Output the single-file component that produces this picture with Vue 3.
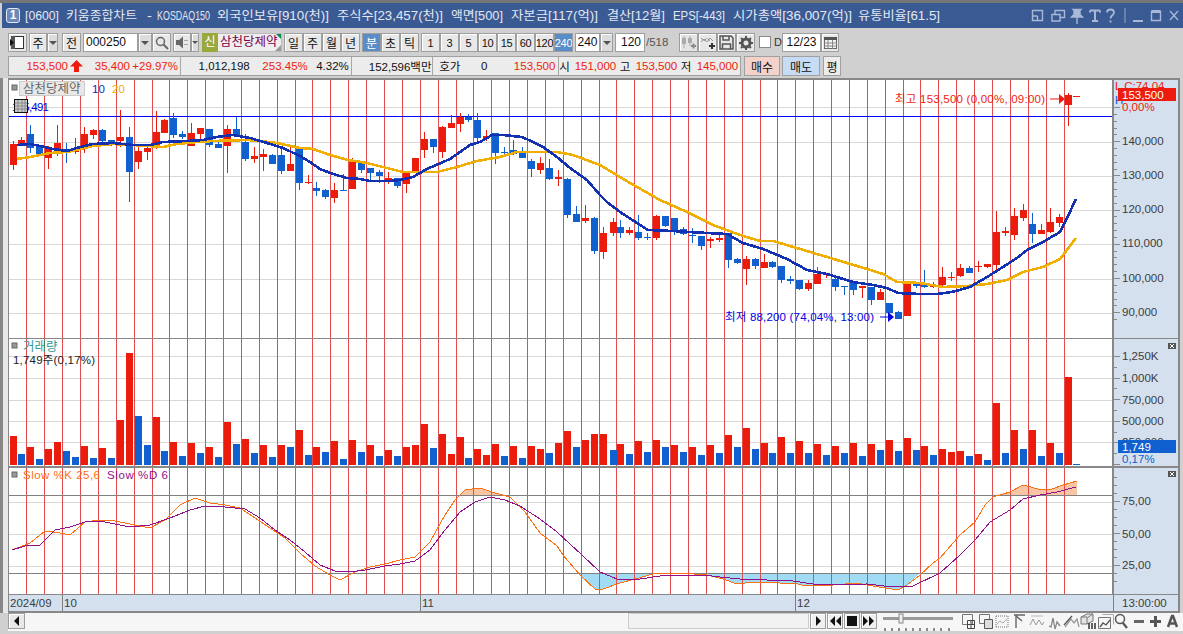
<script setup>
import { computed } from "vue";

// title segments: start x (from the text origin) and drawn width
const titleParts = [
  { t: '[0600]', x: 0, w: 34 },
  { t: '키움종합차트', x: 41, w: 71 },
  { t: '-', x: 122, w: 5 },
  { t: 'KOSDAQ150', x: 132, w: 53 },
  { t: '외국인보유[910(천)]', x: 192, w: 112 },
  { t: '주식수[23,457(천)]', x: 312, w: 106 },
  { t: '액면[500]', x: 426, w: 52 },
  { t: '자본금[117(억)]', x: 486, w: 87 },
  { t: '결산[12월]', x: 582, w: 58 },
  { t: 'EPS[-443]', x: 648, w: 52 },
  { t: '시가총액[36,007(억)]', x: 708, w: 119 },
  { t: '유통비율[61.5]', x: 833, w: 82 },
];

// day separators (the red lines)
const dayLines = [26,44,62,80,98,116,134,152,169,187,205,223,241,259,277,295,312,330,348,366,384,402,420,438,456,473,491,509,527,545,563,581,599,616,634,652,670,688,706,724,742,760,777,795,813,831,849,867,885,903,920,938,956,974,992,1010,1028,1046,1064];

// x, colour, body top, body bottom, wick top, wick bottom (page pixels)
const candles = [
  [13,'R',144,165,141,170],[21,'R',140,145,137,145],[30,'B',134,148,125,153],[39,'B',147,154,146,154],
  [48,'R',147,158,146,169],[57,'R',143,149,125,156],[66,'B',150,153,143,163],[75,'R',148,152,138,154],
  [84,'R',134,149,127,153],[93,'R',130,135,129,139],[102,'B',130,141,129,146],[111,'B',140,144,140,146],
  [120,'R',137,141,110,147],[129,'B',137,172,127,202],[138,'R',151,162,147,169],[147,'R',148,152,146,160],
  [156,'R',132,146,111,149],[164,'R',120,133,119,133],[173,'B',118,135,113,138],[182,'B',134,137,131,139],
  [191,'R',133,146,123,146],[200,'R',128,134,128,140],[209,'B',129,145,129,147],[218,'B',144,148,140,148],
  [227,'R',129,146,125,173],[236,'B',129,136,117,137],[245,'B',142,159,134,161],[254,'R',156,159,147,163],
  [263,'R',154,157,149,171],[272,'B',155,164,154,164],[281,'B',155,171,147,174],[290,'R',164,171,146,171],
  [299,'B',148,183,148,190],[308,'R',182,183,175,184],[316,'B',188,191,182,196],[325,'B',190,197,189,199],
  [334,'R',190,198,183,203],[343,'B',190,191,174,191],[352,'R',162,189,158,189],[361,'B',162,170,161,173],
  [370,'B',168,173,168,180],[379,'B',172,176,170,183],[388,'R',178,180,172,184],[397,'B',178,186,178,188],
  [406,'R',172,184,171,193],[415,'R',158,173,158,173],[424,'R',139,150,132,158],[433,'B',139,147,139,153],
  [442,'R',127,152,126,158],[451,'R',123,128,115,128],[460,'R',117,124,113,132],[468,'B',117,120,114,122],
  [477,'B',120,138,113,143],[486,'R',136,138,130,141],[495,'B',133,153,133,164],[504,'B',152,153,147,156],
  [513,'B',150,154,140,155],[522,'B',152,158,147,158],[531,'B',161,169,159,177],[540,'R',163,170,157,174],
  [549,'B',168,179,159,180],[558,'R',177,179,170,186],[567,'B',179,215,178,218],[576,'B',214,222,206,222],
  [585,'R',218,221,205,223],[594,'B',218,251,217,254],[603,'R',233,252,227,259],[613,'R',222,233,218,236],
  [620,'B',227,233,220,238],[629,'R',230,233,227,235],[638,'B',232,238,215,240],[647,'B',237,238,233,240],
  [656,'R',216,238,215,240],[665,'B',216,226,216,227],[674,'B',218,231,218,235],[683,'B',229,234,227,235],
  [692,'B',235,236,228,243],[701,'B',236,246,236,250],[710,'R',239,241,237,248],[719,'R',238,240,234,242],
  [728,'B',233,260,233,268],[737,'B',259,263,258,264],[746,'R',259,269,256,285],[755,'B',259,266,258,269],
  [764,'R',262,268,254,268],[772,'B',262,267,261,268],[781,'B',266,280,266,283],[790,'B',279,281,276,284],
  [799,'B',280,289,280,290],[808,'R',283,289,280,291],[817,'R',274,284,267,284],[826,'R',273,274,273,278],
  [835,'B',279,287,275,291],[844,'B',286,287,286,295],[853,'B',283,290,282,295],[862,'R',286,288,286,298],
  [871,'B',287,300,287,305],[880,'R',292,300,289,300],[889,'B',303,313,303,313],[898,'B',312,319,311,319],
  [907,'R',284,316,282,316],[916,'B',284,286,282,288],[924,'B',283,287,270,288],[933,'R',285,287,282,288],
  [942,'R',277,285,267,287],[951,'R',277,278,272,281],[960,'R',268,276,264,277],[969,'B',268,273,266,273],
  [978,'R',266,267,261,272],[987,'R',264,267,264,268],[996,'R',232,265,211,270],[1005,'R',231,233,227,236],
  [1014,'R',216,235,208,240],[1023,'R',210,218,204,221],[1032,'B',224,234,213,243],[1041,'R',230,234,224,234],
  [1050,'R',222,232,208,233],[1059,'R',217,223,214,227],[1068,'R',95,105,93,126],[1076,'R',96,97,96,97],
];

const volumes = ('R436 B454 R447 B459 R449 R442 B451 B457 R446 B458 R448 B458 R420 R353 B416 B445 R417 B451 R442 B456 ' +
  'R443 B453 R447 B457 R422 B444 R439 B453 R445 B457 R445 B447 R430 B455 R447 B452 R441 B459 R440 B452 ' +
  'R445 B456 R450 B456 R447 R445 R424 B448 R434 R454 R437 B458 R449 R455 R444 B456 R446 B458 R446 R449 ' +
  'B453 R443 R431 B447 R440 R434 R434 B450 R444 B454 R441 B452 R440 B447 R445 B452 R447 B455 R445 B453 ' +
  'R435 B447 R428 B449 R443 B453 R437 B453 R441 B453 R444 B455 R446 B453 R443 B456 R444 B450 R440 B451 ' +
  'R438 B450 R446 B455 R449 R452 R451 B456 R454 B460 R403 B453 R430 B449 R430 B456 R443 B453 R377 B464').split(' ');

const volumeBars = computed(() => volumes.map((v, i) => ({
  x: candles[i][0] - 3,
  top: Number(v.slice(1)),
  color: v[0],
})));

const ma10 = '17,145 30,144 40,146 53,149 67,151 80,147 93,144 113,143 133,145 150,145 163,142 187,141 203,140 217,137 233,135 250,138 267,143 283,148 300,156 310,162 320,169 333,174 347,178 360,179 370,181 390,181 400,180 413,177 427,169 450,159 460,152 470,145 480,142 492,135 503,135 522,137 533,142 543,147 557,157 570,168 587,180 600,195 607,202 620,212 637,223 648,230 673,231 690,232 707,233 727,234 743,243 763,249 787,259 807,270 827,274 853,282 873,285 887,288 898,293 920,294 937,294 952,292 970,287 987,277 1003,267 1017,258 1027,250 1043,242 1060,232 1067,218 1076,199';
const ma20 = '17,159 30,157 40,155 50,153 67,152 80,149 93,146 113,144 133,145 163,147 177,144 197,142 213,141 247,140 260,141 277,143 300,148 313,149 330,155 348,160 367,163 383,167 403,172 437,172 457,167 477,161 500,157 517,152 557,152 573,155 600,165 630,183 660,200 687,212 713,225 740,235 760,241 773,241 800,249 827,257 867,269 883,274 897,282 920,283 943,287 967,286 987,284 1007,280 1023,272 1043,267 1060,259 1067,250 1076,238';

const slowK = '12,550 30,543 45,531 60,533 70,535 85,522 100,520 115,521 135,525 150,528 165,520 180,505 195,498 210,503 225,505 240,508 255,518 270,528 285,538 300,553 315,566 330,575 340,580 355,572 370,567 385,564 400,560 415,557 430,542 445,515 455,500 465,490 480,488 495,493 510,497 525,512 540,533 557,546 563,555 580,575 595,589 603,589 620,583 635,579 653,574 680,573 707,575 723,579 737,584 753,582 780,583 793,583 807,586 833,585 857,583 873,586 898,590 907,585 920,575 933,563 940,558 960,535 975,522 985,505 993,497 1010,492 1023,485 1042,490 1052,489 1063,485 1077,481';
const slowD = '12,550 25,546 40,545 55,530 70,527 85,522 100,521 115,524 130,527 150,525 170,518 190,510 205,506 225,507 245,509 260,518 275,530 290,540 305,552 320,565 335,571 350,572 365,570 385,566 400,564 415,561 430,550 445,530 460,512 475,502 490,497 505,500 520,506 540,519 557,532 582,555 600,572 617,579 640,579 660,576 680,575 703,575 720,577 740,579 793,581 813,584 833,585 867,584 893,587 913,586 940,573 960,555 975,540 990,522 1010,510 1023,499 1040,495 1057,492 1076,487';

const fillLow = '578,573 580,575 595,589 603,589 620,583 635,579 653,574 680,573 707,575 723,579 737,584 753,582 780,583 793,583 807,586 833,585 857,583 873,586 898,590 907,585 920,573';
const fillHighA = '459,495 465,490 480,488 495,493 505,495';
const fillHighB = '995,495 1010,492 1023,485 1042,490 1052,489 1063,485 1077,481 1077,495';

const gridMain = [107,142,176,210,244,279,313];
const gridVol = [356,378,400,421,442];
const gridStoch = [502,534,566];

const priceLabels = [[141,'140,000'],[175,'130,000'],[209,'120,000'],[243,'110,000'],[278,'100,000'],[312,'90,000']];
const volLabels = [[356,'1,250K'],[378,'1,000K'],[400,'750,000'],[421,'500,000'],[442,'250,000']];
const stochLabels = [[501,'75,00'],[534,'50,00'],[565,'25,00']];

// small ticks on the right axis
const ticks = computed(() => {
  const out = [];
  for (let i = 0; i < 32; i++) {
    const y = Math.round(107 + i * 6.84);
    out.push({ y, len: i % 5 === 0 ? 7 : 4 });
  }
  for (let i = 0; i < 11; i++) {
    const y = Math.round(356 + i * 10.8);
    out.push({ y, len: i % 2 === 0 ? 7 : 4 });
  }
  for (let i = 0; i < 14; i++) {
    const y = Math.round(477 + i * 8);
    if (y < 590) out.push({ y, len: (i - 3) % 4 === 0 ? 7 : 4 });
  }
  return out;
});

const periodA = ['일','주','월','년'];
const periodB = [
  { t: '분', on: true },
  { t: '초' },
  { t: '틱' },
];
const periodC = [
  { t: '1' },{ t: '3' },{ t: '5' },{ t: '10' },{ t: '15' },{ t: '60' },{ t: '120' },{ t: '240', on: true },
];

// quote strip, widths keep the numbers in their columns
const quoteCells = [
  [{ t:'153,500', w:59, c:'red' },{ arrow:true },{ t:'35,400', w:47, c:'red' },{ t:'+29.97%', w:48, c:'red' }],
  [{ t:'1,012,198', w:69 },{ t:'253.45%', w:58, c:'red' },{ t:'4.32%', w:41 }],
  [{ t:'152,596백만', w:80 }],
  [{ t:'호가', w:27 },{ t:'0', w:27 },{ t:'153,500', w:68, c:'red' }],
  [{ t:'시', w:10 },{ t:'151,000', w:47, c:'red' },{ t:'고', w:14 },{ t:'153,500', w:47, c:'red' },{ t:'저', w:14 },{ t:'145,000', w:47, c:'red' }],
];
</script>

<template>
  <div class="app">
    <div class="topline"></div>

    <!-- title bar -->
    <div class="titlebar">
      <span class="win-no">1</span>
      <svg class="title-text" width="920" height="25" viewBox="0 0 920 25">
        <text v-for="p in titleParts" :key="p.t" :x="p.x" y="17" :textLength="p.w" lengthAdjust="spacingAndGlyphs">{{ p.t }}</text>
      </svg>
      <div class="title-icons">
        <svg width="152" height="20" viewBox="0 0 152 20" fill="none" stroke="#a8b8d6" stroke-width="1.4">
          <path d="M1.5 4.5h10v10h-10zM1.5 10h5M6.5 10v4.5" />
          <path d="M21 8.5h8v6.500h-8zM24 8.500V4.500h9.500v7H29" />
          <path d="M42 3.500h8l-1 1v4l2.500 2.500h-11l2.500-2.500v-4zM46 11v7" fill="#a8b8d6" />
          <path d="M59 4.500h10M64 4.500v10M61 15h6M59 4.500v2M69 4.500v2" stroke-width="2" />
          <path d="M76 6.500c0-4 7-4 7 0 0 3-3.500 2.500-3.500 6M79.500 14.500v2" stroke-width="1.800" />
          <path d="M94 2v15" stroke="#7f92b8" />
          <path d="M102 15h10" stroke-width="2" />
          <path d="M120.500 5.500h9v9h-9z" />
          <path d="M120.500 5.500h9" stroke-width="3" />
          <path d="M139 5l8 9M147 5l-8 9" />
        </svg>
      </div>
    </div>

    <!-- toolbars -->
    <div class="toolbar">
      <div class="row row-one">
        <button class="btn w19">
          <svg width="15" height="13" viewBox="0 0 15 13"><rect x="1.500" y="0.500" width="12" height="12" fill="#fff" stroke="#333"/><rect x="1" y="0" width="4" height="13" fill="#555"/><path d="M0 3l4 3.500-4 3.500z" fill="#111"/></svg>
        </button>
        <button class="btn w18 ml2">주</button>
        <button class="btn drop w11"><i class="tri"></i></button>
        <button class="btn w19 ml4">전</button>
        <div class="field w55 ml2">000250</div>
        <button class="btn drop w14"><i class="tri"></i></button>
        <button class="btn w19">
          <svg width="14" height="14" viewBox="0 0 14 14" fill="none" stroke="#666"><circle cx="5.500" cy="5.500" r="4" stroke-width="1.500"/><path d="M8.500 8.500l4.500 4.500" stroke-width="2"/></svg>
        </button>
        <button class="btn w18 ml2">
          <svg width="14" height="13" viewBox="0 0 14 13"><path d="M1 4h3l4-3.500v12l-4-3.500h-3z" fill="#666"/><path d="M10 4v1M10 8v1M12 4v1M12 8v1" stroke="#666"/></svg>
        </button>
        <button class="btn drop w8"><i class="tri small"></i></button>
        <div class="new-tag ml3">신</div>
        <div class="stock-name">삼천당제약
          <i class="corner-top"></i><i class="corner-bot"></i>
        </div>
        <button v-for="p in periodA" :key="p" class="btn w19">{{ p }}</button>
        <button v-for="p in periodB" :key="p.t" class="btn w19" :class="{ on: p.on, ml2: p.t === '분' }">{{ p.t }}</button>
        <button v-for="p in periodC" :key="p.t" class="btn w19 num" :class="{ on: p.on, ml2: p.t === '1' }">{{ p.t }}</button>
        <div class="field w25 ml2 center">240</div>
        <button class="btn drop w13"><i class="tri"></i></button>
        <div class="field w30 ml2 right">120</div>
        <span class="count">/518</span>
        <button class="btn w19 ic-first">
          <svg width="15" height="13" viewBox="0 0 15 13" fill="#aaa"><path d="M3 0v12M9 0v10" stroke="#aaa"/><rect x="1" y="2" width="4" height="6"/><rect x="7" y="2" width="4" height="5"/><path d="M10 10h5M12.500 7.500v5" stroke="#888" stroke-width="2"/></svg>
        </button>
        <button class="btn w19">
          <svg width="15" height="13" viewBox="0 0 15 13" fill="none"><path d="M1 6l3-3 3 3 3-4 3 3" stroke="#999"/><path d="M1 2l3 3 3-3 3 3" stroke="#666" stroke-dasharray="1 1"/><path d="M9 10h6M12 7v6" stroke="#333" stroke-width="2"/></svg>
        </button>
        <button class="btn w19">
          <svg width="15" height="15" viewBox="0 0 15 15" fill="none" stroke="#555" stroke-width="1.500"><path d="M1 1h11l2 2v11h-13z"/><path d="M4 1v4h6v-4M3.500 14v-5h8v5"/></svg>
        </button>
        <button class="btn w19">
          <svg width="14" height="14" viewBox="0 0 14 14"><circle cx="7" cy="7" r="4" fill="none" stroke="#555" stroke-width="3"/><path d="M7 0v14M0 7h14M2 2l10 10M12 2l-10 10" stroke="#555" stroke-width="2" stroke-dasharray="2.500 9 2.500 0"/></svg>
        </button>
        <i class="check"></i>
        <span class="d-label">D</span>
        <div class="field w39 center date">12/23</div>
        <button class="btn w18">
          <svg width="13" height="12" viewBox="0 0 13 12"><rect x="0.500" y="0.500" width="12" height="11" fill="#f4f4f4" stroke="#666"/><rect x="0" y="0" width="13" height="3" fill="#555"/><path d="M0 6h13M0 9h13M4 3v9M8.500 3v9" stroke="#888"/></svg>
        </button>
      </div>

      <div class="row row-two">
        <div class="quote">
          <div v-for="(cell, ci) in quoteCells" :key="ci" class="quote-cell">
            <template v-for="(q, qi) in cell" :key="qi">
              <svg v-if="q.arrow" class="up" width="13" height="12" viewBox="0 0 13 12"><path d="M6.500 0l6.500 6.500h-4v5.500h-5v-5.500h-4z" fill="#ee1c0e"/></svg>
              <span v-else class="q" :class="q.c" :style="{ width: q.w + 'px' }">{{ q.t }}</span>
            </template>
          </div>
        </div>
        <button class="trade buy">매수</button>
        <button class="trade sell">매도</button>
        <button class="trade flat">평</button>
      </div>
    </div>

    <!-- chart -->
    <div class="chart-row">
      <div class="strip"></div>
      <svg class="chart" width="1172" height="535" viewBox="8 78 1172 535">
        <rect x="9" y="79" width="1104" height="515" fill="#fff"/>
        <rect x="1113" y="79" width="66" height="533" fill="#d5e0ee"/>
        <rect x="9" y="595" width="1170" height="17" fill="#d5e0ee"/>

        <!-- grid -->
        <g fill="#d8d8d8">
          <rect v-for="y in gridMain" :key="'m' + y" x="9" :y="y" width="1104" height="1"/>
          <rect v-for="y in gridVol" :key="'v' + y" x="9" :y="y" width="1104" height="1"/>
          <rect v-for="y in gridStoch" :key="'s' + y" x="9" :y="y" width="1104" height="1"/>
        </g>

        <!-- stochastic fill -->
        <polygon :points="fillLow" fill="#a2dcf4"/>
        <polygon :points="fillHighA" fill="#f8c6a4"/>
        <polygon :points="fillHighB" fill="#f8c6a4"/>

        <g fill="#e24c4c">
          <rect v-for="x in dayLines" :key="x" :x="x" y="80" width="1" height="514"/>
        </g>

        <rect x="9" y="495" width="1104" height="1" fill="#808080"/>
        <rect x="9" y="573" width="1104" height="1" fill="#808080"/>
        <rect x="9" y="116" width="1104" height="1" fill="#0000ff"/>

        <!-- candles -->
        <g v-for="(c, i) in candles" :key="'c' + i">
          <rect :x="c[0]" :y="c[4]" width="1" :height="c[5] - c[4]" :class="c[1]"/>
          <rect :x="c[0] - 3" :y="c[2]" width="7" :height="c[3] - c[2]" :class="c[1]"/>
        </g>

        <polyline :points="ma20" class="ma" stroke="#f0ae00"/>
        <polyline :points="ma10" class="ma" stroke="#1230b0"/>

        <!-- volume -->
        <rect v-for="(b, i) in volumeBars" :key="'b' + i" :x="b.x" :y="b.top" width="7" :height="465 - b.top" :class="b.color"/>

        <!-- stochastic lines -->
        <polyline :points="slowK" class="osc" stroke="#ff7010"/>
        <polyline :points="slowD" class="osc" stroke="#90108c"/>

        <!-- high / low marks -->
        <text x="895" y="103" class="lbl" fill="#ee1c0e" textLength="150">최고 153,500 (0,00%, 09:00)</text>
        <path d="M1050 99h10" stroke="#ee1c0e" fill="none"/>
        <path d="M1059 94l6 5-6 5z" fill="#ee1c0e"/>
        <text x="725" y="321" class="lbl" fill="#0000e0" textLength="149">최저 88,200 (74,04%, 13:00)</text>
        <path d="M880 317h10" stroke="#0000e0" fill="none"/>
        <path d="M888 312l6 5-6 5z" fill="#0000e0"/>

        <!-- pane titles -->
        <rect x="12" y="85" width="5" height="5" fill="#999" stroke="#666"/>
        <rect x="19.500" y="81.500" width="65" height="14" fill="#e8e8e8" stroke="#ccc"/>
        <text x="23" y="93" class="lbl kr" fill="#666">삼천당제약</text>
        <text x="92" y="93" class="lbl" fill="#0a28c8">10</text>
        <text x="112" y="93" class="lbl" fill="#f4ae00">20</text>
        <text x="12" y="111" class="lbl" fill="#0000e0" textLength="37">145,491</text>
        <rect x="14.500" y="99.500" width="13" height="13" fill="#ccc" stroke="#111"/>
        <path d="M18 100v12M22 100v12M25 100v12M15 103h12M15 106h12M15 109h12" stroke="#888"/>

        <rect x="12" y="343" width="5" height="5" fill="#999" stroke="#666"/>
        <text x="23" y="351" class="lbl kr" fill="#2f9a9a">거래량</text>
        <text x="13" y="364" class="lbl" fill="#222" textLength="82">1,749주(0,17%)</text>

        <rect x="12" y="472" width="5" height="5" fill="#999" stroke="#666"/>
        <text x="23" y="479" class="lbl" fill="#ff7010" textLength="77">Slow %K 25,6</text>
        <text x="107" y="479" class="lbl" fill="#90108c" textLength="61">Slow %D 6</text>

        <!-- right axis -->
        <g stroke="#888">
          <path v-for="(t, i) in ticks" :key="'t' + i" :d="`M1113 ${t.y + 0.5}h${t.len}`"/>
        </g>
        <text v-for="l in priceLabels" :key="l[1]" x="1122" :y="l[0] + 4" class="lbl axis">{{ l[1] }}</text>
        <text v-for="l in volLabels" :key="l[1]" x="1122" :y="l[0] + 4" class="lbl axis">{{ l[1] }}</text>
        <text v-for="l in stochLabels" :key="l[1]" x="1122" :y="l[0] + 4" class="lbl axis">{{ l[1] }}</text>

        <text x="1115" y="90" class="lbl" fill="#ee1c0e">L C:74,04</text>
        <text x="1115" y="104" class="lbl" fill="#0a5ad0">H</text>
        <rect x="1118" y="88" width="58" height="13" fill="#ee1c0e"/>
        <text x="1122" y="99" class="lbl" fill="#fff">153,500</text>
        <text x="1122" y="111" class="lbl" fill="#ee1c0e">0,00%</text>

        <rect x="1118" y="440" width="58" height="13" fill="#1060d0"/>
        <text x="1122" y="451" class="lbl" fill="#fff">1,749</text>
        <text x="1122" y="463" class="lbl" fill="#1060d0">0,17%</text>

        <g v-for="y in [343, 471]" :key="'x' + y">
          <rect x="1168" :y="y" width="8" height="6" fill="#555"/>
          <path :d="`M1170 ${y + 1}l4 4M1174 ${y + 1}l-4 4`" stroke="#fff" fill="none"/>
        </g>

        <!-- time axis -->
        <rect x="62" y="595" width="1" height="17" fill="#808080"/>
        <rect x="420" y="595" width="1" height="17" fill="#808080"/>
        <rect x="795" y="595" width="1" height="17" fill="#808080"/>
        <rect x="1113" y="595" width="1" height="17" fill="#808080"/>
        <text x="10" y="607" class="lbl axis">2024/09</text>
        <text x="64" y="607" class="lbl axis">10</text>
        <text x="422" y="607" class="lbl axis">11</text>
        <text x="797" y="607" class="lbl axis">12</text>
        <text x="1122" y="607" class="lbl axis">13:00:00</text>

        <!-- pane borders -->
        <g fill="#888">
          <rect x="8" y="78" width="1172" height="2"/>
          <rect x="8" y="338" width="1171" height="1"/>
          <rect x="8" y="466" width="1171" height="2"/>
          <rect x="8" y="594" width="1171" height="1"/>
          <rect x="8" y="611" width="1171" height="2"/>
          <rect x="8" y="78" width="1" height="535"/>
          <rect x="1112" y="78" width="2" height="517"/>
          <rect x="1178" y="78" width="2" height="535"/>
        </g>
      </svg>
    </div>

    <!-- bottom scroll and tools -->
    <div class="scroll-row">
      <button class="btn sbtn"><i class="tri-left"></i></button>
      <div class="track"></div>
      <div class="thumb"></div>
      <button class="btn pbtn">
        <svg width="10" height="12" viewBox="0 0 10 12"><path d="M3 1l5 5-5 5z" fill="#111"/></svg>
      </button>
      <button class="btn pbtn">
        <svg width="12" height="12" viewBox="0 0 12 12"><path d="M6 1v10l-5-5zM12 1v10l-5-5z" fill="#111"/></svg>
      </button>
      <button class="btn pbtn">
        <svg width="10" height="10" viewBox="0 0 10 10"><rect width="10" height="10" y="0" fill="#111"/></svg>
      </button>
      <button class="btn pbtn">
        <svg width="12" height="12" viewBox="0 0 12 12"><path d="M0 1v10l5-5zM6 1v10l5-5z" fill="#111"/></svg>
      </button>
      <div class="slider">
        <svg width="70" height="20" viewBox="0 0 70 20">
          <rect x="0" y="4" width="70" height="3" fill="#999"/>
          <rect x="16" y="1" width="4" height="9" fill="#eee" stroke="#888"/>
          <path d="M2 15v3M9 15v3M16 15v3M23 15v3M30 15v3M37 15v3M44 15v3M51 15v3M58 15v3M66 15v3" stroke="#222"/>
        </svg>
      </div>
      <svg class="tools" width="218" height="18" viewBox="0 0 218 18" fill="none" stroke="#777">
        <path d="M1.500 1.500h10v10h-10z"/><path d="M6.500 7.500h7v8h-7zM6.500 11.500h7M10 7.500v8" stroke="#444"/>
        <path d="M18.500 1.500h10v9h-10z"/><path d="M23.500 6.500h8v9h-8z" fill="#ddd" stroke="#555"/>
        <path d="M35 3h12M35 14h12M35 3v11M47 3v11" stroke-dasharray="1 1"/><path d="M36 11l3-3 3 2 4-4" stroke="#aaa"/>
        <path d="M53 2h11M55 15V3l6 5" stroke="#666" stroke-width="1.400"/>
        <path d="M69 12l3-6 3 6 3-5 3 5 2-3" stroke="#999"/><path d="M70 3h12" stroke="#bbb"/>
        <path d="M88 13l2 1 2-9 2 11 2-7 3 4" stroke="#888" stroke-width="1.300"/>
        <path d="M104 14l6-8 3 4 3-4 2 8" stroke="#999" stroke-width="1.300"/><path d="M103 12l8-9" stroke="#555" stroke-width="1.300"/>
        <path d="M120 4l6-3h6v7l-6 3h-6z" fill="#e4e4e4"/><path d="M126 11v-6l6-4M120 4h6" /><path d="M128 10v6M131 10v6M134 10v6" stroke="#333" stroke-width="1.500"/>
        <path d="M137.500 4.500h12v11h-12z"/><path d="M141.500 1.500h11v10" stroke="#aaa"/><path d="M139 14l3-4 3 2 4-5" stroke="#555" stroke-width="1.300"/>
        <circle cx="159" cy="6" r="4.500" stroke="#555" stroke-width="1.500"/><path d="M162 10l4 5" stroke="#555" stroke-width="2.200"/>
        <path d="M173 8.500h10" stroke="#666" stroke-width="3"/>
        <path d="M189 8.500h11M194.500 3v11" stroke="#555" stroke-width="3"/>
        <path d="M207 14l4-11h1l4 11M208.500 10.500h6" stroke="#555" stroke-width="2.500"/>
      </svg>
    </div>
  </div>
</template>

<style scoped>
.app {
  width: 1183px;
  height: 634px;
  background: #d0d0d0;
  display: flex;
  flex-direction: column;
  overflow: hidden;
  font-family: "Liberation Sans", "Noto Sans CJK KR", sans-serif;
  font-size: 12px;
  color: #111;
}

.topline {
  height: 3px;
  background: #777;
  flex: none;
}

.titlebar {
  height: 25px;
  flex: none;
  margin-left: 2px;
  background: #3a5a94;
  display: flex;
  align-items: center;
  color: #e2e8f3;
  position: relative;
}

.win-no {
  width: 12px;
  height: 13px;
  margin-left: 4px;
  border: 1px solid #e2e8f3;
  border-radius: 3px;
  background: #6c88b8;
  color: #fff;
  font-size: 12px;
  font-weight: 700;
  line-height: 13px;
  text-align: center;
  flex: none;
}

.title-text {
  margin-left: 5px;
  flex: none;
  display: block;
  overflow: visible;
}

.title-text text {
  font-family: "Liberation Sans", "Noto Sans CJK KR", sans-serif;
  font-size: 12.500px;
  fill: #e2e8f3;
}

.title-icons {
  position: absolute;
  left: 1029px;
  top: 3px;
}

.toolbar {
  height: 50px;
  flex: none;
  padding: 5px 0 0 8px;
  box-sizing: border-box;
}

.row {
  display: flex;
  align-items: stretch;
}

.row-one {
  height: 19px;
}

.row-two {
  height: 20px;
  margin-top: 4px;
}

.btn {
  box-sizing: border-box;
  padding: 0;
  margin: 0;
  flex: none;
  border: 1px solid #9e9e9e;
  background: #e8e8e8;
  box-shadow: inset 1px 1px 0 #fff;
  font-family: inherit;
  font-size: 12px;
  color: #111;
  display: flex;
  align-items: center;
  justify-content: center;
  overflow: hidden;
}

.btn.num {
  font-size: 11px;
  letter-spacing: -0.300px;
}

.btn.on {
  background: #5a8cc8;
  color: #fff;
  box-shadow: none;
}

.drop {
  background: #dcdcdc;
}

.tri {
  width: 0;
  height: 0;
  border-left: 4px solid transparent;
  border-right: 4px solid transparent;
  border-top: 4px solid #555;
}

.tri.small {
  border-left-width: 3px;
  border-right-width: 3px;
  border-top-width: 3px;
}

.tri-left {
  width: 0;
  height: 0;
  border-top: 5px solid transparent;
  border-bottom: 5px solid transparent;
  border-right: 5px solid #111;
}

.w8 { width: 8px; }
.w11 { width: 11px; }
.w13 { width: 13px; }
.w14 { width: 14px; }
.w18 { width: 18px; }
.w19 { width: 19px; }
.w25 { width: 25px; }
.w30 { width: 30px; }
.w39 { width: 39px; }
.w55 { width: 55px; }
.ml2 { margin-left: 2px; }
.ml3 { margin-left: 3px; }
.ml4 { margin-left: 4px; }

.field {
  box-sizing: border-box;
  flex: none;
  border: 1px solid #9e9e9e;
  background: #fff;
  padding: 0 2px;
  line-height: 17px;
  font-size: 12px;
}

.field.center { text-align: center; padding: 0; }
.field.right { text-align: right; padding-right: 3px; }
.field.date { margin-left: 2px; }

.count {
  width: 34px;
  flex: none;
  color: #555;
  line-height: 19px;
  padding-left: 1px;
  box-sizing: border-box;
  font-size: 11.500px;
}

.ic-first {
  background: #e4e4e4;
}

.new-tag {
  width: 16px;
  flex: none;
  background: #9aa83e;
  color: #fff;
  text-align: center;
  line-height: 19px;
}

.stock-name {
  width: 64px;
  flex: none;
  box-sizing: border-box;
  position: relative;
  background: #eeeeee;
  border: 1px solid #bbb;
  border-left: none;
  color: #7c0044;
  font-size: 12.500px;
  line-height: 17px;
  white-space: nowrap;
  overflow: hidden;
  padding-left: 2px;
  margin-right: 2px;
}

.corner-top {
  position: absolute;
  right: 0;
  top: 0;
  border-top: 5px solid #0a8a50;
  border-left: 5px solid transparent;
}

.corner-bot {
  position: absolute;
  right: 0;
  bottom: 0;
  border-bottom: 6px solid #999;
  border-left: 6px solid transparent;
}

.check {
  width: 12px;
  height: 12px;
  box-sizing: border-box;
  flex: none;
  margin: 3px 3px 0 4px;
  background: #fff;
  border: 1px solid #888;
}

.d-label {
  width: 6px;
  flex: none;
  line-height: 18px;
  font-size: 11px;
  color: #333;
}

.quote {
  width: 733px;
  flex: none;
  box-sizing: border-box;
  display: flex;
  background: #ececec;
  border: 1px solid #a0a0a0;
}

.quote-cell {
  display: flex;
  align-items: center;
  border-right: 1px solid #a8a8a8;
  white-space: nowrap;
  box-sizing: border-box;
}

.quote-cell:nth-child(1) { width: 172px; }
.quote-cell:nth-child(2) { width: 171px; }
.quote-cell:nth-child(3) { width: 82px; }
.quote-cell:nth-child(4) { width: 126px; }
.quote-cell:nth-child(5) { width: 181px; border-right: none; }

.q {
  display: block;
  flex: none;
  text-align: right;
  font-size: 11.500px;
}

.q.red { color: #ee1c0e; }

.up {
  flex: none;
  margin-left: 2px;
}

.trade {
  box-sizing: border-box;
  flex: none;
  padding: 0;
  font-family: inherit;
  font-size: 12px;
  color: #111;
  border: 1px solid #a0a0a0;
}

.trade.buy { width: 36px; margin-left: 3px; background: #f4d2ca; }
.trade.sell { width: 38px; margin-left: 2px; background: #c6dcf4; }
.trade.flat { width: 18px; margin-left: 3px; background: #ececec; }

.chart-row {
  height: 535px;
  flex: none;
  display: flex;
}

.strip {
  width: 8px;
  flex: none;
  background: linear-gradient(90deg, #888 0 3px, #e8e8e8 3px 8px);
}

.chart {
  display: block;
  flex: none;
}

.R { fill: #ec1c0c; }
.B { fill: #1060d0; }

.ma {
  fill: none;
  stroke-width: 2.600;
  shape-rendering: crispEdges;
}

.osc {
  fill: none;
  stroke-width: 1;
  shape-rendering: crispEdges;
}

.lbl {
  font-family: "Liberation Sans", "Noto Sans CJK KR", sans-serif;
  font-size: 11.500px;
}

.lbl.kr {
  font-size: 12.500px;
}

.axis {
  fill: #3c3c3c;
}

.scroll-row {
  height: 18px;
  flex: none;
  margin-left: 8px;
  display: flex;
  align-items: flex-start;
  background: #f6f6f6;
  position: relative;
}

.sbtn {
  width: 17px;
  height: 16px;
}

.track {
  width: 603px;
  height: 16px;
  flex: none;
}

.thumb {
  width: 181px;
  height: 16px;
  flex: none;
  box-sizing: border-box;
  background: #f2f2f2;
  border: 1px solid #ccc;
}

.pbtn {
  width: 16px;
  height: 16px;
  margin-left: 1px;
  background: #f0f0f0;
}

.slider {
  width: 70px;
  flex: none;
  margin-left: 6px;
}

.tools {
  flex: none;
  margin-left: 8px;
}
</style>

<style>
html, body {
  margin: 0;
  background: #d0d0d0;
}
</style>
